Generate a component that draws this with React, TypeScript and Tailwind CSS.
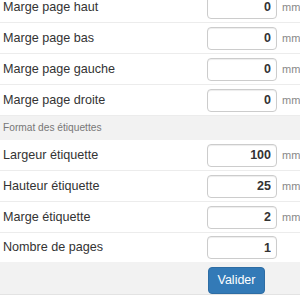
import React from "react";

const margins = [
  { label: "Marge page haut", value: "0", unit: "mm" },
  { label: "Marge page bas", value: "0", unit: "mm" },
  { label: "Marge page gauche", value: "0", unit: "mm" },
  { label: "Marge page droite", value: "0", unit: "mm" },
];

const format = [
  { label: "Largeur étiquette", value: "100", unit: "mm" },
  { label: "Hauteur étiquette", value: "25", unit: "mm" },
  { label: "Marge étiquette", value: "2", unit: "mm" },
  { label: "Nombre de pages", value: "1", unit: "" },
];

type Field = { label: string; value: string; unit: string };

const Row = ({ field, last }: { field: Field; last?: boolean }) => (
  <div
    className={
      last
        ? "flex h-[29px] items-center"
        : "flex h-[31px] items-center border-b border-[#ececec]"
    }
  >
    <span className="flex-1 pl-[3px] text-[12.6px] text-[#333]">{field.label}</span>
    <input
      readOnly
      value={field.value}
      className="h-[23px] w-[70px] rounded-[4px] border border-[#ccc] bg-white pr-[5px] text-right text-[12.5px] font-bold text-[#333] shadow-[inset_0_1px_1px_rgba(0,0,0,0.075)] outline-none"
    />
    <span className="w-[23px] pl-[5px] text-[11px] text-[#888]">{field.unit}</span>
  </div>
);

export default function App() {
  return (
    <div
      className="mt-[-8px] w-[300px] bg-white"
      style={{ fontFamily: '"Liberation Sans", Arial, sans-serif' }}
    >
      {margins.map((f) => (
        <Row key={f.label} field={f} />
      ))}
      <div className="flex h-[24px] items-center bg-[#f2f2f2] pl-[3px] text-[10.2px] text-[#777]">
        Format des étiquettes
      </div>
      {format.map((f, i) => (
        <Row key={f.label} field={f} last={i === format.length - 1} />
      ))}
      <div className="flex h-[33px] items-start border-b border-[#e3e3e3] bg-[#f2f2f2] pl-[208px] pt-[5px]">
        <button className="h-[27px] w-[57px] rounded-[4px] border border-[#2e6da4] bg-[#337ab7] text-[12.5px] text-white">
          Valider
        </button>
      </div>
    </div>
  );
}
